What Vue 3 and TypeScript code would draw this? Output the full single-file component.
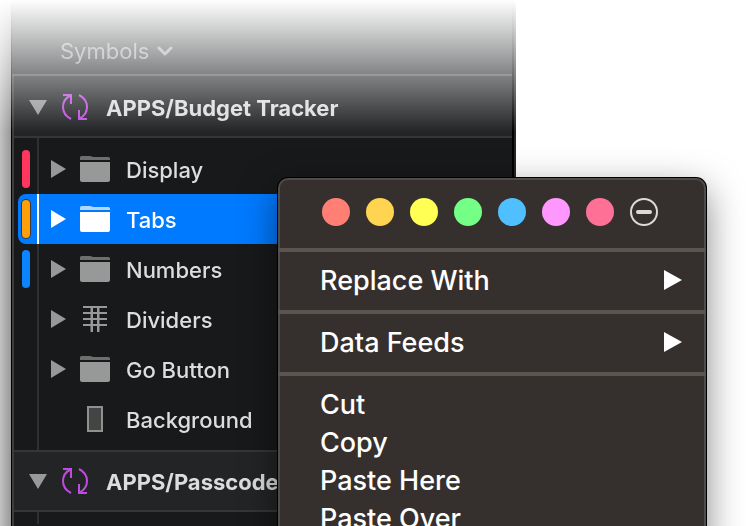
<script setup lang="ts">
type Layer = {
  name: string
  icon: 'folder' | 'grid' | 'rect'
  tag?: string
  selected?: boolean
}

const budgetLayers: Layer[] = [
  { name: 'Display', icon: 'folder', tag: 'red' },
  { name: 'Tabs', icon: 'folder', tag: 'orange', selected: true },
  { name: 'Numbers', icon: 'folder', tag: 'blue' },
  { name: 'Dividers', icon: 'grid' },
  { name: 'Go Button', icon: 'folder' },
  { name: 'Background', icon: 'rect' },
]

const groups: { name: string; layers: Layer[] }[] = [
  { name: 'APPS/Budget Tracker', layers: budgetLayers },
  { name: 'APPS/Passcode', layers: [] },
]

const colours = ['coral', 'amber', 'yellow', 'green', 'blue', 'violet', 'pink']
const submenus = ['Replace With', 'Data Feeds']
const commands = ['Cut', 'Copy', 'Paste Here', 'Paste Over']
</script>

<template>
  <main class="page">
    <div class="fade">
      <section class="panel" aria-label="Layers">
        <header class="panel-head">
          <button class="filter" type="button">
            Symbols
            <svg class="chevron" viewBox="0 0 16 10" width="16" height="10">
              <path d="M2 2l6 6 6-6" />
            </svg>
          </button>
        </header>
        <div v-for="group in groups" :key="group.name" class="group">
          <button class="group-head" type="button">
            <svg class="caret-down" viewBox="0 0 18 15" width="18" height="15">
              <path d="M0 0h18L9 15z" />
            </svg>
            <svg class="symbol" viewBox="0 0 28 28" width="28" height="28">
              <path d="M2 2h8v9M9.500 2.500C4.500 5 2 9 2 14c0 5.500 3 9.500 8 12" />
              <path d="M26 26h-8v-9M18.500 25.500C23.500 23 26 19 26 14c0-5.500-3-9.500-8-12" />
            </svg>
            <span class="label">{{ group.name }}</span>
          </button>
          <ul class="layers">
            <li v-for="layer in group.layers" :key="layer.name">
              <button class="layer" :class="{ selected: layer.selected }" type="button">
                <span class="gutter"><i v-if="layer.tag" class="tag" :class="layer.tag"></i></span>
                <svg class="caret" :class="{ hidden: layer.icon === 'rect' }" viewBox="0 0 15 18" width="15" height="18">
                  <path d="M0 0l15 9-15 9z" />
                </svg>
                <svg class="icon" viewBox="0 0 30 26" width="30" height="26">
                  <template v-if="layer.icon === 'folder'">
                    <path class="back" d="M0 4V1.500Q0 0 1.500 0H10q1 0 2 .5 1 .5 2 .5H28.500q1.500 0 1.500 1.500V4z" />
                    <path class="front" d="M0 6h30v18q0 2-2 2H2q-2 0-2-2z" />
                  </template>
                  <path
                    v-else-if="layer.icon === 'grid'"
                    class="front"
                    d="M3 0h24v2H3zM3 6h24v2H3zM3 12h24v2H3zM3 18h24v2H3zM10.500 0h2.500v26h-2.500zM17 0h2.500v26h-2.500z"
                  />
                  <rect v-else class="shape" x="8" y="1" width="14" height="24" />
                </svg>
                <span class="label">{{ layer.name }}</span>
              </button>
            </li>
          </ul>
        </div>
      </section>
    </div>

    <div class="menu" role="menu">
      <div class="swatches">
        <button v-for="c in colours" :key="c" class="swatch" :class="c" type="button" :aria-label="c"></button>
        <button class="clear" type="button" aria-label="No colour">
          <svg viewBox="0 0 28 28" width="28" height="28">
            <circle cx="14" cy="14" r="13" />
            <path d="M8 14h12" />
          </svg>
        </button>
      </div>
      <div v-for="item in submenus" :key="item" class="section">
        <button class="item" type="button" role="menuitem">
          {{ item }}
          <svg viewBox="0 0 18 20" width="18" height="20"><path d="M0 0l18 10L0 20z" /></svg>
        </button>
      </div>
      <div class="section">
        <button v-for="item in commands" :key="item" class="item" type="button" role="menuitem">{{ item }}</button>
      </div>
    </div>
  </main>
</template>

<style>
body {
  margin: 0;
  background: #fff;
}
</style>

<style scoped>
.page {
  position: relative;
  height: 100vh;
  overflow: hidden;
  font-family: Inter, "Liberation Sans", sans-serif;
}
button {
  margin: 0;
  padding: 0;
  border: 0;
  background: none;
  color: inherit;
  font: inherit;
  text-align: left;
}
svg {
  display: block;
  flex: none;
}
.fade {
  box-sizing: border-box;
  width: calc(100% - 230px);
  height: 100%;
  padding-left: 11px;
  overflow: hidden;
  background: linear-gradient(90deg, #c2c2c2, #989898 11px);
  mask-image: linear-gradient(transparent, #000 132px);
}
.panel {
  box-sizing: border-box;
  min-height: 100%;
  border-left: 1px solid #000;
  border-right: 2px solid #262626;
  background: #17191a;
  box-shadow: inset 2px 0 #3b3c3e, inset -2px 0 #000;
  font-size: 22px;
  font-weight: 500;
  color: #dcdddd;
}
.panel-head {
  display: flex;
  box-sizing: border-box;
  height: 76px;
  margin-right: 2px;
  padding: 28px 0 0 48px;
  border-bottom: 2px solid #4a4c4e;
  background: #222426;
}
.filter {
  display: flex;
  align-items: center;
  gap: 8px;
  height: 46px;
  color: #929495;
  font-weight: 400;
}
.chevron {
  fill: none;
  stroke: currentColor;
  stroke-width: 3;
  stroke-linecap: round;
  stroke-linejoin: round;
}
.group-head {
  display: flex;
  align-items: center;
  box-sizing: border-box;
  width: calc(100% - 4px);
  height: 62px;
  margin-left: 2px;
  padding-left: 15px;
  border-bottom: 2px solid #343638;
  background: #222426;
  font-weight: 700;
}
.panel-head + .group .group-head {
  padding-top: 2px;
}
.group + .group .group-head {
  border-top: 2px solid #343638;
}
.label {
  padding-top: 2px;
}
.caret-down {
  margin-right: 14px;
  fill: #97999a;
}
.symbol {
  margin-right: 17px;
  fill: none;
  stroke: #c04be0;
  stroke-width: 2;
}
.layers {
  margin: 0 2px;
  padding: 6px 0;
  list-style: none;
  background: linear-gradient(#2e3032, #2e3032) 23px 0 / 2px 100% no-repeat;
}
.layer {
  display: flex;
  align-items: center;
  width: calc(100% - 4px);
  height: 50px;
  margin-left: 4px;
}
.gutter {
  display: flex;
  align-items: center;
  box-sizing: border-box;
  width: 21px;
  height: 100%;
  margin-right: 12px;
  padding-left: 4px;
}
.tag {
  width: 8px;
  height: 38px;
  border-radius: 4px;
}
.tag.red { background: #ff375f; }
.tag.orange { background: #ff9f0a; box-shadow: 0 0 0 1px #3a3a3c; }
.tag.blue { background: #0a84ff; }
.caret {
  margin-right: 14px;
  fill: #979998;
}
.hidden { visibility: hidden; }
.icon { margin-right: 16px; }
.front { fill: #979998; }
.back { fill: #6d6f6e; }
.shape {
  fill: #444;
  stroke: #8f918f;
  stroke-width: 2;
}
.selected {
  border-radius: 8px 0 0 8px;
  background: #007aff;
  color: #fff;
}
.selected .gutter { border-right: 2px solid #fff; }
.selected .caret,
.selected .front { fill: #fff; }
.selected .back { fill: #b3d7ff; }
.menu {
  position: absolute;
  top: 178px;
  left: 278px;
  box-sizing: border-box;
  width: 428px;
  border: 2px solid #504c49;
  border-radius: 10px;
  background: #35302d;
  box-shadow: 0 0 0 1px #000, 0 12px 36px rgba(0, 0, 0, 0.5);
  color: #fff;
  font-size: 27px;
  font-weight: 500;
}
.swatches {
  display: flex;
  gap: 16px;
  padding: 18px 42px 22px;
}
.swatch {
  width: 28px;
  height: 28px;
  border-radius: 50%;
}
.coral { background: #ff7f74; }
.amber { background: #ffd450; }
.yellow { background: #ffff54; }
.green { background: #74ff87; }
.blue { background: #4fbfff; }
.violet { background: #ff97ff; }
.pink { background: #ff7096; }
.clear svg {
  fill: none;
  stroke: #dcdad6;
  stroke-width: 2;
}
.clear path {
  stroke-width: 4;
  stroke-linecap: round;
}
.section {
  margin: 0 -2px;
  padding: 9px 24px 11px 42px;
  border-top: 4px solid #5a5551;
  box-shadow: inset 2px 0 #504c49, inset -2px 0 #504c49;
}
.item {
  display: flex;
  align-items: center;
  justify-content: space-between;
  width: 100%;
  height: 38px;
}
.item svg { fill: #fff; }
</style>
